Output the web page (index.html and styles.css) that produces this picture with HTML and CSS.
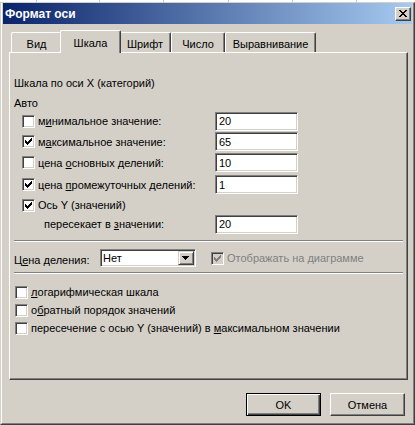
FILE: index.html
```html
<!DOCTYPE html>
<html lang="ru">
<head>
    <meta charset="UTF-8">
    <title>Формат оси</title>
    <link rel="stylesheet" href="styles.css">
</head>
<body>

    <div class="sheet"></div>

    <div class="dialog">
        <div class="frame">

            <!-- Title bar -->
            <div class="titlebar">
                <span class="title">Формат оси</span>
                <button class="close-btn">
                    <svg width="14" height="12" viewBox="0 0 14 12"><path d="M3 2h2v1h-2zM9 2h2v1h-2zM4 3h2v1h-2zM8 3h2v1h-2zM5 4h4v1h-4zM6 5h2v1h-2zM5 6h4v1h-4zM4 7h2v1h-2zM8 7h2v1h-2zM3 8h2v1h-2zM9 8h2v1h-2z" fill="#000"/></svg>
                </button>
            </div>

            <div class="content">

                <!-- Tabs -->
                <div class="tabs">
                    <div class="tab tab-vid">Вид</div>
                    <div class="tab active">Шкала</div>
                    <div class="tab tab-font">Шрифт</div>
                    <div class="tab tab-num">Число</div>
                    <div class="tab tab-align">Выравнивание</div>
                </div>

                <div class="panel">
                    <div class="caption">Шкала по оси X (категорий)</div>
                    <div class="caption auto">Авто</div>

                    <div class="opt r1">
                        <span class="cb"></span>
                        <label>м<u>и</u>нимальное значение:</label>
                        <input class="field" value="20">
                    </div>
                    <div class="opt r2">
                        <span class="cb"><svg width="11" height="11" viewBox="0 0 11 11"><path d="M2 4h1v3h-1zM3 5h1v3h-1zM4 6h1v3h-1zM5 5h1v3h-1zM6 4h1v3h-1zM7 3h1v3h-1zM8 2h1v3h-1z" fill="#000"/></svg></span>
                        <label>м<u>а</u>ксимальное значение:</label>
                        <input class="field" value="65">
                    </div>
                    <div class="opt r3">
                        <span class="cb"></span>
                        <label>цена <u>о</u>сновных делений:</label>
                        <input class="field" value="10">
                    </div>
                    <div class="opt r4">
                        <span class="cb"><svg width="11" height="11" viewBox="0 0 11 11"><path d="M2 4h1v3h-1zM3 5h1v3h-1zM4 6h1v3h-1zM5 5h1v3h-1zM6 4h1v3h-1zM7 3h1v3h-1zM8 2h1v3h-1z" fill="#000"/></svg></span>
                        <label>цена <u>п</u>ромежуточных делений:</label>
                        <input class="field" value="1">
                    </div>
                    <div class="opt r5">
                        <span class="cb"><svg width="11" height="11" viewBox="0 0 11 11"><path d="M2 4h1v3h-1zM3 5h1v3h-1zM4 6h1v3h-1zM5 5h1v3h-1zM6 4h1v3h-1zM7 3h1v3h-1zM8 2h1v3h-1z" fill="#000"/></svg></span>
                        <label>Ось Y (значений)</label>
                    </div>
                    <div class="opt r6">
                        <label class="indent">пересекает в <u>з</u>начении:</label>
                        <input class="field" value="20">
                    </div>

                    <div class="sep"></div>

                    <div class="scale-row">
                        <label class="scale-label">Ц<u>е</u>на деления:</label>
                        <div class="select">
                            <span>Нет</span>
                            <span class="select-btn">
                                <svg width="14" height="12" viewBox="0 0 14 12"><path d="M3 4h7v1h-7zM4 5h5v1h-5zM5 6h3v1h-3zM6 7h1v1h-1z" fill="#000"/></svg>
                            </span>
                        </div>
                        <span class="cb disabled"><svg width="11" height="11" viewBox="0 0 11 11"><path d="M2 4h1v3h-1zM3 5h1v3h-1zM4 6h1v3h-1zM5 5h1v3h-1zM6 4h1v3h-1zM7 3h1v3h-1zM8 2h1v3h-1z" fill="#808080"/></svg></span>
                        <label class="muted">Отображать на диаграмме</label>
                    </div>

                    <div class="sep sep2"></div>

                    <div class="flag first">
                        <span class="cb"></span>
                        <label><u>л</u>огарифмическая шкала</label>
                    </div>
                    <div class="flag">
                        <span class="cb"></span>
                        <label>о<u>б</u>ратный порядок значений</label>
                    </div>
                    <div class="flag">
                        <span class="cb"></span>
                        <label>пересечение с осью Y (значений) в <u>м</u>аксимальном значении</label>
                    </div>
                </div>

                <!-- Dialog buttons -->
                <div class="buttons">
                    <button class="btn default">OK</button>
                    <button class="btn">Отмена</button>
                </div>

            </div>
        </div>
    </div>

</body>
</html>
```

FILE: styles.css
```css
* {
    box-sizing: border-box;
}

body {
    margin: 0;
    background: #fff;
    font-family: "Liberation Sans", Arial, sans-serif;
    font-size: 11px;
    color: #000;
}

/* Excel sheet behind the dialog */
.sheet {
    height: 2px;
    background:
        linear-gradient(#c8c8c8, #c8c8c8) 36px 0 / 1px 100% no-repeat,
        linear-gradient(#c8c8c8, #c8c8c8) 99px 0 / 1px 100% no-repeat,
        linear-gradient(#c8c8c8, #c8c8c8) 163px 0 / 1px 100% no-repeat,
        linear-gradient(#c8c8c8, #c8c8c8) 228px 0 / 1px 100% no-repeat,
        linear-gradient(#c8c8c8, #c8c8c8) 292px 0 / 1px 100% no-repeat,
        linear-gradient(#c8c8c8, #c8c8c8) 356px 0 / 1px 100% no-repeat,
        #fff;
}

/* Dialog window */
.dialog {
    width: 415px;
    height: 423px;
    border: 1px solid;
    border-color: #d4d0c8 #404040 #404040 #d4d0c8;
    background: #d4d0c8;
}

.frame {
    height: 100%;
    border-left: 1px solid #fff;
    border-right: 1px solid #808080;
    border-bottom: 1px solid #808080;
    padding: 0 1px 1px;
    display: flex;
    flex-direction: column;
}

.titlebar {
    height: 21px;
    flex: none;
    display: flex;
    align-items: center;
    justify-content: space-between;
    padding: 0 1px 0 2px;
    background: linear-gradient(to right, #0a246a, #a6caf0);
}

.title {
    color: #fff;
    font-weight: bold;
    font-size: 12px;
}

.close-btn {
    width: 16px;
    height: 14px;
    padding: 0;
    display: flex;
    border: 1px solid;
    border-color: #fff #404040 #404040 #fff;
    box-shadow: inset -1px -1px #808080;
    background: #d4d0c8;
}

.content {
    flex: 1;
    display: flex;
    flex-direction: column;
    padding: 6px 4px 6px 6px;
}

/* Tabs */
.tabs {
    height: 22px;
    flex: none;
    display: flex;
    align-items: flex-end;
    padding-left: 2px;
}

.tab {
    height: 20px;
    padding-top: 5px;
    line-height: 13px;
    text-align: center;
    border-top: 1px solid #fff;
    border-left: 1px solid #fff;
    border-right: 1px solid #404040;
    box-shadow: inset -1px 0 #808080;
    border-radius: 2px 2px 0 0;
    background: #d4d0c8;
}

.tab-vid { width: 51px; }
.tab-font { width: 52px; }
.tab-num { width: 54px; }
.tab-align { width: 91px; }

.tab.active {
    width: 61px;
    height: 23px;
    margin: 0 -2px -1px;
    padding-top: 6px;
    position: relative;
    z-index: 1;
}

/* Tab page */
.panel {
    height: 328px;
    flex: none;
    border: 1px solid;
    border-color: #fff #404040 #404040 #fff;
    box-shadow: inset -1px -1px #808080;
    padding: 0 4px;
}

.caption {
    margin-top: 22px;
    line-height: 16px;
}

.caption.auto {
    margin-top: 4px;
}

.opt {
    display: flex;
    align-items: center;
    padding-left: 8px;
    height: 21px;
}

.opt.r1 { height: 20px; }
.opt.r4 { height: 23px; }
.opt.r5 { height: 18px; }
.opt.r6 { height: 20px; }

.opt label {
    width: 177px;
}

.opt label.indent {
    width: 193px;
    padding-left: 22px;
}

.cb {
    width: 13px;
    height: 13px;
    flex: none;
    margin-right: 3px;
    border: 1px solid;
    border-color: #808080 #fff #fff #808080;
    box-shadow: inset 1px 1px #404040, inset -1px -1px #d4d0c8;
    background: #fff;
    display: flex;
}

.cb.disabled {
    background: #d4d0c8;
    margin-left: 15px;
}

.field {
    width: 83px;
    height: 19px;
    padding: 0 3px;
    font-family: "Liberation Sans", Arial, sans-serif;
    font-size: 11px;
    color: #000;
    border: 1px solid;
    border-color: #808080 #fff #fff #808080;
    box-shadow: inset 1px 1px #404040, inset -1px -1px #d4d0c8;
    background: #fff;
    outline: none;
}

.sep {
    height: 2px;
    margin-top: 6px;
    border-top: 1px solid #808080;
    border-bottom: 1px solid #fff;
}

.sep.sep2 {
    margin-top: 5px;
}

/* Scale row */
.scale-row {
    display: flex;
    align-items: center;
    height: 18px;
    margin-top: 7px;
}

.scale-label {
    width: 86px;
    padding-top: 3px;
}

.select {
    width: 96px;
    height: 18px;
    display: flex;
    align-items: center;
    justify-content: space-between;
    padding-left: 2px;
    border: 1px solid;
    border-color: #808080 #fff #fff #808080;
    box-shadow: inset 1px 1px #404040, inset -1px -1px #d4d0c8;
    background: #fff;
}

.select-btn {
    width: 16px;
    height: 14px;
    margin-right: 1px;
    display: flex;
    border: 1px solid;
    border-color: #d4d0c8 #404040 #404040 #d4d0c8;
    box-shadow: inset 1px 1px #fff, inset -1px -1px #808080;
    background: #d4d0c8;
}

.muted {
    color: #808080;
}

/* Bottom flags */
.flag {
    display: flex;
    align-items: center;
    height: 18px;
    padding-left: 1px;
}

.flag.first {
    margin-top: 9px;
}

/* Buttons */
.buttons {
    display: flex;
    justify-content: flex-end;
    gap: 9px;
    margin-top: 13px;
    padding-right: 3px;
}

.btn {
    width: 75px;
    height: 23px;
    padding: 0;
    font-family: "Liberation Sans", Arial, sans-serif;
    font-size: 11px;
    color: #000;
    border: 1px solid;
    border-color: #fff #404040 #404040 #fff;
    box-shadow: inset -1px -1px #808080;
    background: #d4d0c8;
}

.btn.default {
    border-color: #000;
    box-shadow: inset 1px 1px #fff, inset -1px -1px #404040, inset -2px -2px #808080;
}
```
